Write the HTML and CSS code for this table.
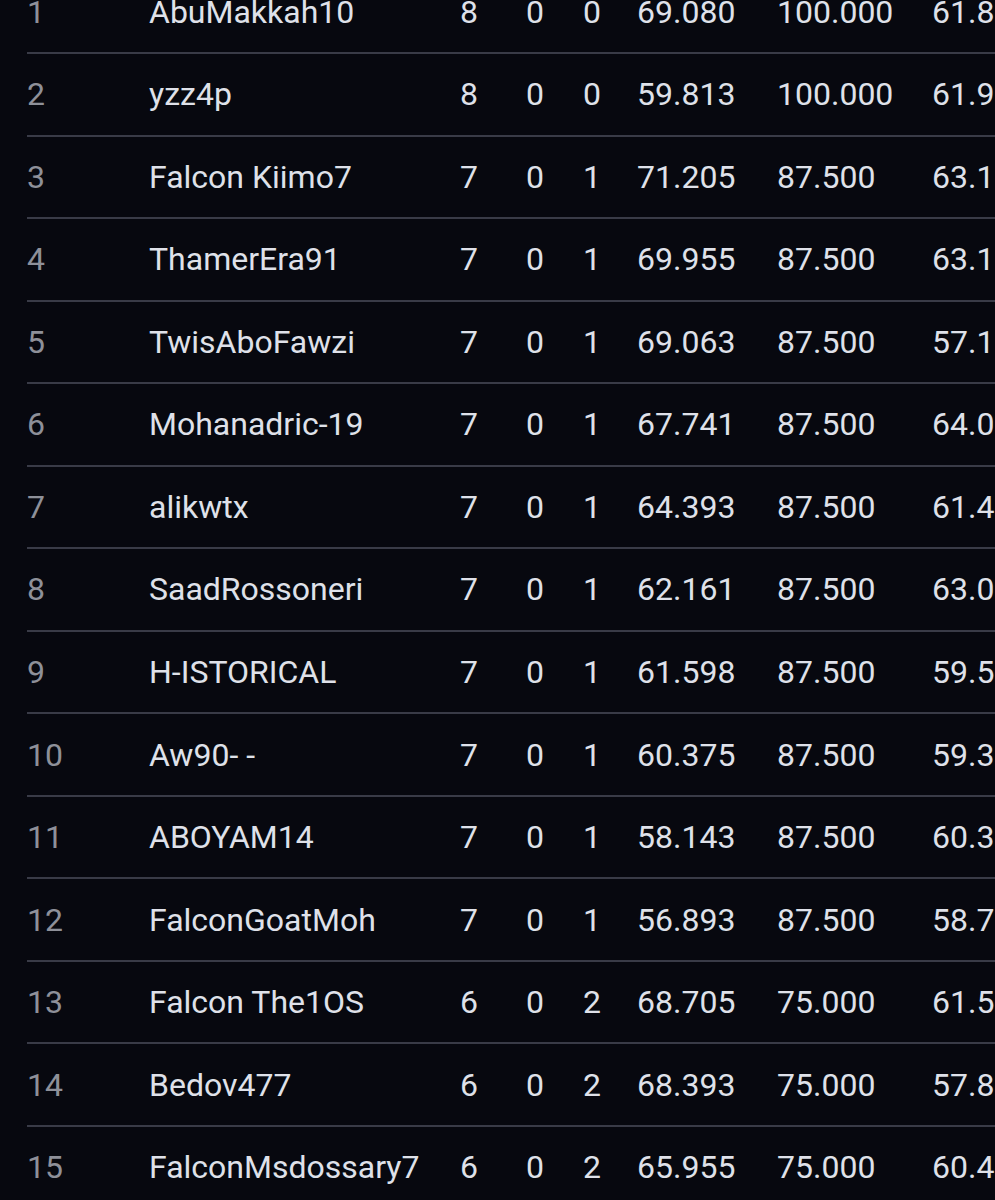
FILE: index.html
```html
<!DOCTYPE html>
<html>
<head>
<meta charset="utf-8">
<link rel="stylesheet" href="styles.css">
</head>
<body>
<div class="table">
  <div class="row"><span class="rank">1</span><span class="name">AbuMakkah10</span><span class="c">8</span><span class="c">0</span><span class="c">0</span><span class="n pts">69.080</span><span class="n">100.000</span><span class="n">61.8</span></div>
  <div class="row"><span class="rank">2</span><span class="name">yzz4p</span><span class="c">8</span><span class="c">0</span><span class="c">0</span><span class="n pts">59.813</span><span class="n">100.000</span><span class="n">61.9</span></div>
  <div class="row"><span class="rank">3</span><span class="name">Falcon Kiimo7</span><span class="c">7</span><span class="c">0</span><span class="c">1</span><span class="n pts">71.205</span><span class="n">87.500</span><span class="n">63.1</span></div>
  <div class="row"><span class="rank">4</span><span class="name">ThamerEra91</span><span class="c">7</span><span class="c">0</span><span class="c">1</span><span class="n pts">69.955</span><span class="n">87.500</span><span class="n">63.1</span></div>
  <div class="row"><span class="rank">5</span><span class="name">TwisAboFawzi</span><span class="c">7</span><span class="c">0</span><span class="c">1</span><span class="n pts">69.063</span><span class="n">87.500</span><span class="n">57.1</span></div>
  <div class="row"><span class="rank">6</span><span class="name">Mohanadric-19</span><span class="c">7</span><span class="c">0</span><span class="c">1</span><span class="n pts">67.741</span><span class="n">87.500</span><span class="n">64.0</span></div>
  <div class="row"><span class="rank">7</span><span class="name">alikwtx</span><span class="c">7</span><span class="c">0</span><span class="c">1</span><span class="n pts">64.393</span><span class="n">87.500</span><span class="n">61.4</span></div>
  <div class="row"><span class="rank">8</span><span class="name">SaadRossoneri</span><span class="c">7</span><span class="c">0</span><span class="c">1</span><span class="n pts">62.161</span><span class="n">87.500</span><span class="n">63.0</span></div>
  <div class="row"><span class="rank">9</span><span class="name">H-ISTORICAL</span><span class="c">7</span><span class="c">0</span><span class="c">1</span><span class="n pts">61.598</span><span class="n">87.500</span><span class="n">59.5</span></div>
  <div class="row"><span class="rank">10</span><span class="name">Aw90- -</span><span class="c">7</span><span class="c">0</span><span class="c">1</span><span class="n pts">60.375</span><span class="n">87.500</span><span class="n">59.3</span></div>
  <div class="row"><span class="rank">11</span><span class="name">ABOYAM14</span><span class="c">7</span><span class="c">0</span><span class="c">1</span><span class="n pts">58.143</span><span class="n">87.500</span><span class="n">60.3</span></div>
  <div class="row"><span class="rank">12</span><span class="name">FalconGoatMoh</span><span class="c">7</span><span class="c">0</span><span class="c">1</span><span class="n pts">56.893</span><span class="n">87.500</span><span class="n">58.7</span></div>
  <div class="row"><span class="rank">13</span><span class="name">Falcon The1OS</span><span class="c">6</span><span class="c">0</span><span class="c">2</span><span class="n pts">68.705</span><span class="n">75.000</span><span class="n">61.5</span></div>
  <div class="row"><span class="rank">14</span><span class="name">Bedov477</span><span class="c">6</span><span class="c">0</span><span class="c">2</span><span class="n pts">68.393</span><span class="n">75.000</span><span class="n">57.8</span></div>
  <div class="row"><span class="rank">15</span><span class="name">FalconMsdossary7</span><span class="c">6</span><span class="c">0</span><span class="c">2</span><span class="n pts">65.955</span><span class="n">75.000</span><span class="n">60.4</span></div>
</div>
</body>
</html>
```

FILE: styles.css
```css
html, body {
  margin: 0;
  padding: 0;
  background: #07080f;
  overflow: hidden;
  width: 995px;
  height: 1200px;
}
body {
  font-family: Roboto, "Liberation Sans", sans-serif;
  font-size: 32px;
  color: #dfe1e9;
}
.table {
  margin-top: -28.5px;
  margin-left: 27px;
  width: 1100px;
}
.row {
  display: grid;
  grid-template-columns: 121px 292px 58px 74px 40px 164px 155px 100px;
  align-items: center;
  height: 80.54px;
  border-bottom: 2px solid #393b47;
  white-space: nowrap;
}
.rank {
  color: #8e9099;
}
.name {
  padding-left: 1px;
}
.c {
  text-align: center;
}
.n {
  padding-left: 1px;
}
.pts {
  padding-left: 25px;
}
```
